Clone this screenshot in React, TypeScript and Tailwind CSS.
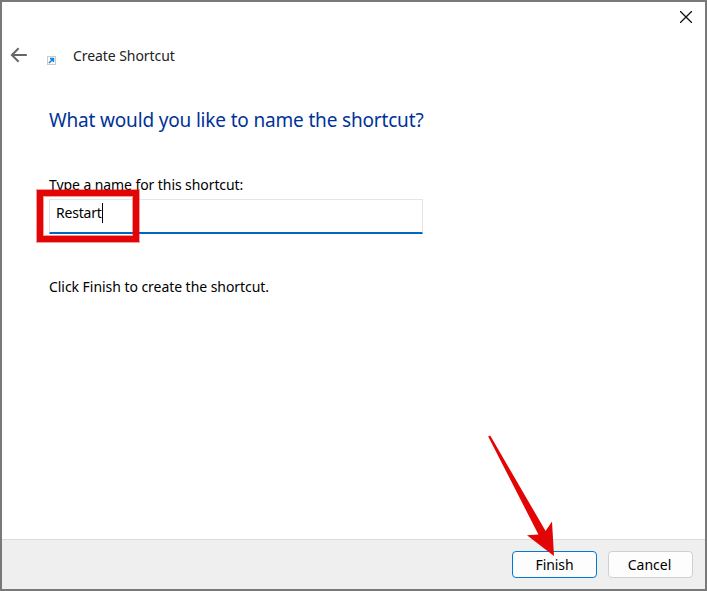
import type { ReactNode } from 'react'

interface DialogButtonProps {
  children: ReactNode; primary?: boolean
}

function DialogButton({ children, primary }: DialogButtonProps) {
  return (
    <button
      className={`h-[27px] w-[85px] rounded-[4px] border bg-[#fdfdfd] pb-px text-[14px] leading-[25px] ${
        primary ? 'border-[#0078d4] tracking-[-0.1px]' : 'border-[#d0d0d0] pr-[2px] tracking-[0px]'
      }`}
    >
      {children}
    </button>
  )
}

function BackIcon() {
  return (
    <svg width="18" height="16" viewBox="0 0 18 16" fill="none" stroke="#666" strokeWidth="2">
      <path d="M8.6 1.2 1.9 8l6.7 6.8M2 8h14.8" />
    </svg>
  )
}

function ShortcutIcon() {
  return (
    <svg width="9" height="9" viewBox="0 0 9 9" fill="none">
      <rect x=".5" y=".5" width="8" height="8" fill="#fcfcfc" stroke="#c8ccd0" />
      <path d="M2 7 6 3M3 2.6h3.4V6" stroke="#1683d8" strokeWidth="1.6" />
    </svg>
  )
}

export default function App() {
  return (
    <div
      className="relative flex h-[591px] w-[707px] flex-col overflow-hidden border-2 border-[#797979] bg-white text-[14px] text-black"
      style={{ fontFamily: '"Noto Sans", "Open Sans", sans-serif' }}
    >
      {/* Title bar */}
      <div className="flex h-[38px] justify-end pt-[9px] pr-[13px]">
        <svg width="12" height="12" viewBox="0 0 12 12" stroke="#111" strokeWidth="1.3">
          <path d="m0 0 12 12M12 0 0 12" />
        </svg>
      </div>

      {/* Wizard header */}
      <header className="flex h-[30px] items-center pl-[8px]">
        <BackIcon />
        <div className="ml-[19px] pt-[10px]"><ShortcutIcon /></div>
        <span className="ml-[17px] pt-[2px] leading-5 tracking-[-0.07px] whitespace-nowrap text-[#222]">Create Shortcut</span>
      </header>

      {/* Page body */}
      <main className="flex flex-1 flex-col items-start pl-[47px] whitespace-nowrap">
        <h1 className="mt-[36px] text-[19px] leading-7 tracking-[-0.17px] text-[#003399]">What would you like to name the shortcut?</h1>
        <label className="mt-[41px] leading-5 tracking-[-0.08px]">Type a name for this shortcut:</label>
        <div className="relative mt-[4px] flex h-[35px] w-[374px] border border-b-2 border-[#e5e5e5] border-b-[#0067c0] pt-[3px] pl-[6px]">
          <span className="leading-5 tracking-[-0.2px]">Restart</span>
          <span className="h-5 w-px bg-black" />
          <div className="absolute -top-[10px] -left-[13px] h-[52px] w-[102px] border-[6px] border-[#e30505] shadow-[0_0_0_1px_rgba(227,5,5,0.4),inset_0_0_0_1px_rgba(227,5,5,0.4)]" />
        </div>
        <p className="mt-[43px] leading-5 tracking-[-0.05px]">Click Finish to create the shortcut.</p>
      </main>

      {/* Footer */}
      <footer className="flex h-[50px] shrink-0 justify-end gap-[11px] border-t border-[#dcdcdc] bg-[#efefef] pt-[11px] pr-[12px]">
        <DialogButton primary>Finish</DialogButton>
        <DialogButton>Cancel</DialogButton>
      </footer>

      {/* Arrow pointing at Finish */}
      <svg className="absolute top-[432px] left-[484px]" width="72" height="124" viewBox="0 0 72 124">
        <path d="M2.2 2.4 4.2 1.6 59.6 97l6.4-9.5L68 122 41 101.3l11.4-.8Z" fill="#e30505" />
      </svg>
    </div>
  )
}
